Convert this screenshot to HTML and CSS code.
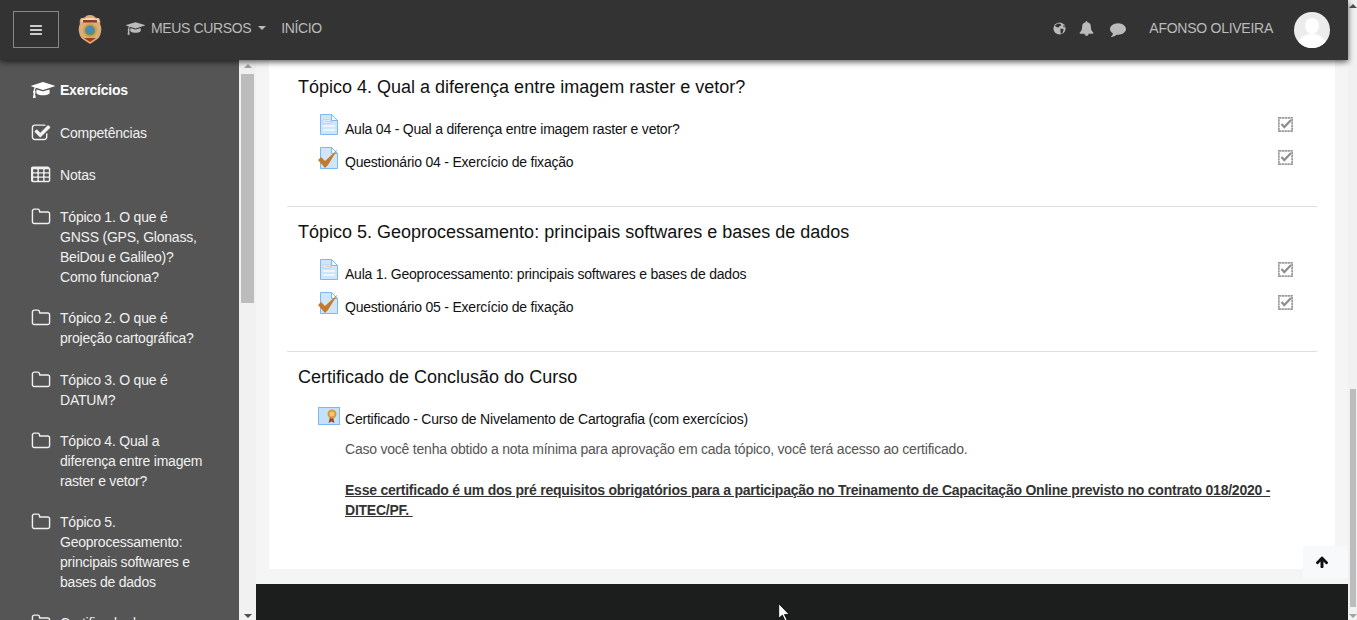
FILE: index.html
```html
<!DOCTYPE html>
<html lang="pt-BR">
<head>
<meta charset="utf-8">
<title>Curso de Nivelamento de Cartografia</title>
<link rel="stylesheet" href="styles.css">
</head>
<body>
<svg class="defs" width="0" height="0" aria-hidden="true">
  <defs>
    <symbol id="i-cap" viewBox="0 0 2304 1792" preserveAspectRatio="xMinYMid"><path d="M1774 836l18 316q4 69-82 128t-235 93.5-323 34.5-323-34.5-235-93.5-82-128l18-316 574 181q22 7 48 7t48-7zm530-324q0 23-22 31L1162 895q-4 1-10 1t-10-1L490 689q-43 34-71 111.5T385 979q63 36 63 109 0 69-58 107l58 433q2 14-8 25-9 11-24 11H224q-15 0-24-11-10-11-8-25l58-433q-58-38-58-107 0-73 65-111 11-207 98-330L22 543q-22-8-22-31t22-31l1120-352q4-1 10-1t10 1l1120 352q22 8 22 31z"/></symbol>
    <symbol id="i-check" viewBox="0 0 1792 1792" preserveAspectRatio="xMinYMid"><path d="M1472 930v318q0 119-84.5 203.5T1184 1536H352q-119 0-203.5-84.5T64 1248V416q0-119 84.5-203.5T352 128h832q63 0 117 25 15 7 18 23 3 17-9 29l-49 49q-10 10-23 10-3 0-9-2-23-6-45-6H352q-66 0-113 47t-47 113v832q0 66 47 113t113 47h832q66 0 113-47t47-113V994q0-13 9-22l64-64q10-10 23-10 6 0 12 3 20 8 20 29zm231-489l-814 814q-24 24-57 24t-57-24L345 825q-24-24-24-57t24-57l110-110q24-24 57-24t57 24l263 263 647-647q24-24 57-24t57 24l110 110q24 24 24 57t-24 57z"/></symbol>
    <symbol id="i-table" viewBox="0 0 1664 1792" preserveAspectRatio="xMinYMid"><path d="M576 1376v-192q0-14-9-23t-23-9H224q-14 0-23 9t-9 23v192q0 14 9 23t23 9h320q14 0 23-9t9-23zm0-384V800q0-14-9-23t-23-9H224q-14 0-23 9t-9 23v192q0 14 9 23t23 9h320q14 0 23-9t9-23zm512 384v-192q0-14-9-23t-23-9H736q-14 0-23 9t-9 23v192q0 14 9 23t23 9h320q14 0 23-9t9-23zM576 608V416q0-14-9-23t-23-9H224q-14 0-23 9t-9 23v192q0 14 9 23t23 9h320q14 0 23-9t9-23zm512 384V800q0-14-9-23t-23-9H736q-14 0-23 9t-9 23v192q0 14 9 23t23 9h320q14 0 23-9t9-23zm512 384v-192q0-14-9-23t-23-9h-320q-14 0-23 9t-9 23v192q0 14 9 23t23 9h320q14 0 23-9t9-23zm-512-768V416q0-14-9-23t-23-9H736q-14 0-23 9t-9 23v192q0 14 9 23t23 9h320q14 0 23-9t9-23zm512 384V800q0-14-9-23t-23-9h-320q-14 0-23 9t-9 23v192q0 14 9 23t23 9h320q14 0 23-9t9-23zm0-384V416q0-14-9-23t-23-9h-320q-14 0-23 9t-9 23v192q0 14 9 23t23 9h320q14 0 23-9t9-23zm128-320v1088q0 66-47 113t-113 47H160q-66 0-113-47T0 1376V288q0-66 47-113t113-47h1344q66 0 113 47t47 113z"/></symbol>
    <symbol id="i-folder" viewBox="0 0 1792 1792" preserveAspectRatio="xMinYMid"><path d="M1600 1312V608q0-40-28-68t-68-28H800q-40 0-68-28t-28-68v-64q0-40-28-68t-68-28H288q-40 0-68 28t-28 68v960q0 40 28 68t68 28h1216q40 0 68-28t28-68zm128-704v704q0 92-66 158t-158 66H288q-92 0-158-66t-66-158V352q0-92 66-158t158-66h320q92 0 158 66t66 158v32h672q92 0 158 66t66 158z"/></symbol>
    <symbol id="i-doc" viewBox="0 0 18 21">
      <path d="M.5.5h11l6 6v14H.5z" fill="#cfe6fa" stroke="#7db9ee"/>
      <path d="M11.500.5v6h6z" fill="#f4faff" stroke="#7db9ee"/>
      <rect x="3" y="6" width="8" height="3" fill="#fdfdfd" stroke="#8fc0ea" stroke-width=".6"/>
      <rect x="5" y="7" width="6" height="1" fill="#f1cb9d"/>
      <path d="M3 11h12v2H3zM3 15h12v2H3z" fill="#eaf5fd"/>
    </symbol>
    <symbol id="i-quiz" viewBox="0 0 21 22">
      <path d="M2.500.5h11l6 6v15h-17z" fill="#cfe6fa" stroke="#7db9ee"/>
      <path d="M13.500.5v6h6z" fill="#f4faff" stroke="#7db9ee"/>
      <path d="M0 13l3-3 4 4L19.500 2.500 10 18l-3 3z" fill="#c47a28"/>
    </symbol>
    <symbol id="i-cert" viewBox="0 0 22 18">
      <rect x=".5" y=".5" width="21" height="17" fill="#c5e1f9" stroke="#7db9ee"/>
      <path d="M12 10l-1.500 6 3-1.500 3 1.500-1.500-6z" fill="#9a4a2a"/>
      <circle cx="14" cy="7" r="4.500" fill="#d99a3c"/>
      <circle cx="14" cy="7" r="2.500" fill="#f1c777"/>
    </symbol>
    <symbol id="i-done" viewBox="0 0 15 15">
      <rect x=".85" y=".85" width="13.300" height="13.300" fill="none" stroke="#9a9a9a" stroke-width="1.700" stroke-dasharray="2.400 .5"/>
      <path d="M3.500 7l2.800 3L13 3" fill="none" stroke="#8f8f8f" stroke-width="2.300"/>
    </symbol>
  </defs>
</svg>

<div class="shell">
  <div class="page">
    <header class="topbar">
      <button class="menu-btn" type="button" aria-label="Menu">
        <svg class="menu-ico" viewBox="0 0 1792 1792"><path d="M1664 1344v128q0 26-19 45t-45 19H192q-26 0-45-19t-19-45v-128q0-26 19-45t45-19h1408q26 0 45 19t19 45zm0-512v128q0 26-19 45t-45 19H192q-26 0-45-19t-19-45V832q0-26 19-45t45-19h1408q26 0 45 19t19 45zm0-512v128q0 26-19 45t-45 19H192q-26 0-45-19t-19-45V320q0-26 19-45t45-19h1408q26 0 45 19t19 45z"/></svg>
      </button>
      <svg class="logo" viewBox="0 0 24 30" aria-label="Brasão">
        <path d="M3 3q4 0 5-2 4-2 8 0 1 2 5 2 2 3 1 6 2 3 1 8-1 6-5 8l-6 4-6-4q-4-2-5-8-1-5 1-8-1-3 1-6z" fill="#dcae76"/>
        <path d="M4 4q4 0 5-1h6q1 1 5 1l1 3q-9-2-18 0z" fill="#f0dcc0"/>
        <path d="M5 5h14v2.500H5z" fill="#8f3a2c"/>
        <circle cx="12" cy="15.500" r="7" fill="#c9a24a"/>
        <circle cx="12" cy="15.500" r="5" fill="#5f8f6a"/>
        <circle cx="12" cy="14.500" r="3.500" fill="#4a88c0"/>
        <path d="M6 23h12l-6 4z" fill="#a33a28"/>
      </svg>
      <nav class="topnav">
        <svg class="cap-ico"><use href="#i-cap"/></svg>
        <a class="navlink">MEUS CURSOS</a>
        <span class="caret"></span>
        <a class="navlink home">INÍCIO</a>
      </nav>
      <div class="tools">
        <svg class="tool globe" viewBox="0 0 14 14">
          <circle cx="7" cy="7" r="6.500" fill="#bbb"/>
          <path d="M5 1.500l3 .5 1 1.500-2 1-1 1.500-2.500-.5-1.500-1.500zM8 7l3.500.5-1 4-2 1.500-.5-3zM11 3l2 2.500-1.500.5z" fill="#333"/>
        </svg>
        <svg class="tool bell" viewBox="0 0 1792 1792"><path d="M912 1696q0-16-16-16-59 0-101.500-42.500T752 1536q0-16-16-16t-16 16q0 73 51.500 124.500T896 1712q16 0 16-16zm816-288q0 52-38 90t-90 38h-448q0 106-75 181t-181 75-181-75-75-181H192q-52 0-90-38t-38-90q50-42 91-88t85-119.500 74.500-158.500 50-206T384 576q0-152 117-282.500T808 135q-8-19-8-39 0-40 28-68t68-28 68 28 28 68q0 20-8 39 190 28 307 158.500T1408 576q0 139 19.500 260t50 206 74.500 158.500 85 119.500 91 88z"/></svg>
        <svg class="tool comment" viewBox="0 0 1792 1792"><path d="M1792 896q0 174-120 321.500t-326 233-450 85.500q-70 0-145-8-198 175-460 242-49 14-114 22-17 2-30.500-9t-17.500-29v-1q-3-4-.5-12t2-10 4.500-9.500l6-9 7-8.500 8-9q7-8 31-34.500t34.500-38 31-39.500 32.500-51 27-59 26-76q-157-89-247.500-220T0 896q0-130 71-248.500T262 443t286-136.500T896 256q244 0 450 85.500t326 233T1792 896z"/></svg>
        <span class="username">AFONSO OLIVEIRA</span>
        <svg class="avatar" viewBox="0 0 36 36">
          <circle cx="18" cy="18" r="18" fill="#ececec"/>
          <clipPath id="av"><circle cx="18" cy="18" r="18"/></clipPath>
          <g clip-path="url(#av)" fill="#fff">
            <ellipse cx="18" cy="14" rx="7" ry="8"/>
            <ellipse cx="18" cy="35" rx="15" ry="13"/>
          </g>
        </svg>
      </div>
    </header>

    <div class="workspace">
      <aside class="sidebar">
        <ul class="sidemenu">
          <li class="side-item active"><svg class="side-ico"><use href="#i-cap"/></svg><span>Exercícios</span></li>
          <li class="side-item"><svg class="side-ico"><use href="#i-check"/></svg><span>Competências</span></li>
          <li class="side-item"><svg class="side-ico"><use href="#i-table"/></svg><span>Notas</span></li>
          <li class="side-item"><svg class="side-ico"><use href="#i-folder"/></svg><span>Tópico 1. O que é GNSS (GPS, Glonass, BeiDou e Galileo)? Como funciona?</span></li>
          <li class="side-item"><svg class="side-ico"><use href="#i-folder"/></svg><span>Tópico 2. O que é projeção cartográfica?</span></li>
          <li class="side-item"><svg class="side-ico"><use href="#i-folder"/></svg><span>Tópico 3. O que é DATUM?</span></li>
          <li class="side-item"><svg class="side-ico"><use href="#i-folder"/></svg><span>Tópico 4. Qual a diferença entre imagem raster e vetor?</span></li>
          <li class="side-item"><svg class="side-ico"><use href="#i-folder"/></svg><span>Tópico 5. Geoprocessamento: principais softwares e bases de dados</span></li>
          <li class="side-item"><svg class="side-ico"><use href="#i-folder"/></svg><span>Certificado de Conclusão do Curso</span></li>
        </ul>
      </aside>
      <div class="rail side-rail">
        <span class="arrow up"></span>
        <span class="thumb side-thumb"></span>
        <span class="arrow down"></span>
      </div>
      <main class="main">
        <div class="card">
          <section class="topic">
            <h3 class="topic-title">Tópico 4. Qual a diferença entre imagem raster e vetor?</h3>
            <ul class="activities">
              <li class="activity"><svg class="a-ico doc"><use href="#i-doc"/></svg><a class="a-name">Aula 04 - Qual a diferença entre imagem raster e vetor?</a><svg class="a-done"><use href="#i-done"/></svg></li>
              <li class="activity"><svg class="a-ico quiz"><use href="#i-quiz"/></svg><a class="a-name">Questionário 04 - Exercício de fixação</a><svg class="a-done"><use href="#i-done"/></svg></li>
            </ul>
          </section>
          <section class="topic">
            <h3 class="topic-title">Tópico 5. Geoprocessamento: principais softwares e bases de dados</h3>
            <ul class="activities">
              <li class="activity"><svg class="a-ico doc"><use href="#i-doc"/></svg><a class="a-name">Aula 1. Geoprocessamento: principais softwares e bases de dados</a><svg class="a-done"><use href="#i-done"/></svg></li>
              <li class="activity"><svg class="a-ico quiz"><use href="#i-quiz"/></svg><a class="a-name">Questionário 05 - Exercício de fixação</a><svg class="a-done"><use href="#i-done"/></svg></li>
            </ul>
          </section>
          <section class="topic last">
            <h3 class="topic-title">Certificado de Conclusão do Curso</h3>
            <div class="activity cert"><svg class="a-ico certi"><use href="#i-cert"/></svg><a class="a-name">Certificado - Curso de Nivelamento de Cartografia (com exercícios)</a></div>
            <div class="cert-text">
              <p>Caso você tenha obtido a nota mínima para aprovação em cada tópico, você terá acesso ao certificado.</p>
              <p class="notice">Esse certificado é um dos pré requisitos obrigatórios para a participação no Treinamento de Capacitação Online previsto no contrato 018/2020 - DITEC/PF.&nbsp;</p>
            </div>
          </section>
        </div>
        <footer class="footer"></footer>
        <a class="to-top" aria-label="Topo">
          <svg class="to-top-ico" viewBox="0 0 1792 1792"><path d="M1675 971q0 51-37 90l-75 75q-38 38-91 38-54 0-90-38L1088 842v704q0 52-37.500 84.500T960 1663H832q-53 0-90.500-32.500T704 1546V842L410 1136q-36 38-90 38t-90-38l-75-75q-38-38-38-90 0-53 38-91l651-651q35-37 90-37 54 0 91 37l651 651q37 39 37 91z"/></svg>
        </a>
      </main>
    </div>
  </div>
  <div class="rail page-rail">
    <span class="arrow up small"></span>
    <span class="thumb page-thumb"></span>
    <span class="arrow down small"></span>
  </div>
</div>

<svg class="cursor" viewBox="0 0 12 18" aria-hidden="true"><path d="M.5.5v14l3.500-3 2.500 5.500 2-1-2.500-5h4.500z" fill="#fff" stroke="#000" stroke-width=".8"/></svg>
</body>
</html>
```

FILE: styles.css
```css
* { box-sizing: border-box; }
html, body { margin: 0; height: 100%; overflow: hidden; }
body { font-family: "Liberation Sans", Arial, sans-serif; font-size: 14px; color: #111; background: #f5f5f5; }
ul { list-style: none; margin: 0; padding: 0; }
.defs { position: absolute; }

.shell { display: flex; height: 620px; }
.page { flex: 1; min-width: 0; display: flex; flex-direction: column; }

/* top bar */
.topbar { position: relative; z-index: 2; flex: 0 0 60px; display: flex; align-items: center; padding: 0 18px 0 13px; background: #333; box-shadow: 0 2px 6px rgba(0,0,0,.65); color: #bbb; }
.menu-btn { width: 46px; height: 37px; padding: 0; display: flex; align-items: center; justify-content: center; background: transparent; border: 1px solid #888; margin-top: -1px; }
.menu-ico { width: 14px; height: 14px; fill: #ccc; }
.logo { width: 24px; height: 30px; margin-left: 19px; }
.topnav { display: flex; align-items: center; margin-left: 24px; margin-bottom: 4px; }
.cap-ico { width: 19px; height: 15px; fill: #bbb; margin-right: 6px; }
.navlink { font-size: 14px; letter-spacing: -.36px; color: #bbb; }
.caret { margin-left: 7px; border-left: 4px solid transparent; border-right: 4px solid transparent; border-top: 4px solid #bbb; }
.home { margin-left: 15px; }
.tools { margin-left: auto; display: flex; align-items: center; }
.tool { fill: #bbb; margin-bottom: 4px; }
.globe { width: 13px; height: 13px; }
.bell { width: 15px; height: 15px; margin-left: 13px; }
.comment { width: 16px; height: 16px; margin-left: 16px; margin-bottom: 2px; }
.username { margin-left: 23px; margin-bottom: 4px; font-size: 14px; letter-spacing: -.26px; color: #bbb; }
.avatar { width: 36px; height: 36px; margin-left: 21px; }

/* workspace */
.workspace { flex: 1; min-height: 0; display: flex; }
.sidebar { flex: 0 0 239px; background: #555; overflow: hidden; padding: 20.4px 30px 0 31px; color: #f0f0f0; }
.side-item { display: flex; font-size: 14px; line-height: 20px; letter-spacing: -.22px; margin-bottom: 21.25px; }
.side-item span { margin-left: 5px; }
.side-item.active { font-weight: 700; color: #fff; }
.side-ico { flex: 0 0 24px; width: 24px; height: 20px; margin-bottom: 1px; fill: #f0f0f0; }
.side-item.active .side-ico { fill: #fff; }

/* scrollbars */
.rail { position: relative; background: #f1f1f1; display: flex; flex-direction: column; align-items: center; }
.side-rail { flex: 0 0 17px; padding-top: 14px; }
.page-rail { flex: 0 0 9px; }
.thumb { background: #bcbcbc; }
.side-thumb { width: 13px; height: 229px; }
.page-thumb { width: 6px; height: 218px; margin-top: 389px; margin-left: 1px; }
.arrow { position: absolute; left: 50%; margin-left: -4px; border-left: 4px solid transparent; border-right: 4px solid transparent; }
.arrow.up { top: 4px; border-bottom: 4px solid #a3a3a3; }
.arrow.down { bottom: 2px; border-top: 4px solid #505050; }
.arrow.small.up { border-bottom-color: #505050; }
.arrow.small.down { border-top-color: #a3a3a3; }

/* main */
.main { position: relative; flex: 1; min-width: 0; display: flex; flex-direction: column; background: #f5f5f5; }
.card { margin: 0 13px; flex: 0 0 509px; background: #fff; padding: 17px 18px 0; }
.footer { margin-top: 15px; flex: 1; background: #1c1e1e; }
.topic { border-bottom: 1px solid #dedede; padding: 0 0 27px 11px; margin-bottom: 15px; }
.topic.last { border-bottom: 0; margin-bottom: 0; padding-bottom: 0; }
.topic-title { margin: 0 0 16px; font-size: 18px; font-weight: 400; line-height: 20px; color: #111; }
.activity { display: flex; align-items: center; height: 33px; padding: 0 0 2px 20px; }
.a-ico { flex: none; }
.doc { width: 18px; height: 21px; margin: -8px 7px 0 2px; }
.quiz { width: 21px; height: 22px; margin: -8px 6px 0 0; }
.certi { width: 22px; height: 18px; margin: -6px 5px 0 0; }
.a-name { color: #111; letter-spacing: -.215px; }
.a-done { width: 15px; height: 15px; margin: -8px 24px 0 auto; }
.cert { height: 32px; padding-bottom: 0; }
.cert-text { margin-left: 47px; margin-right: 20px; color: #555; line-height: 20px; letter-spacing: -.22px; }
.cert-text p { margin: 4px 0 0; }
.cert-text .notice { margin-top: 21px; font-weight: 700; letter-spacing: -.235px; text-decoration: underline; color: #333; }

.to-top { position: absolute; right: 0; top: 486px; width: 45px; height: 32px; display: flex; align-items: center; padding-left: 12px; background: #f8f9fa; }
.to-top-ico { width: 14px; height: 14px; fill: #111; margin-top: -1px; }

.cursor { position: absolute; left: 778px; top: 603px; width: 13px; height: 19px; z-index: 5; }
```
